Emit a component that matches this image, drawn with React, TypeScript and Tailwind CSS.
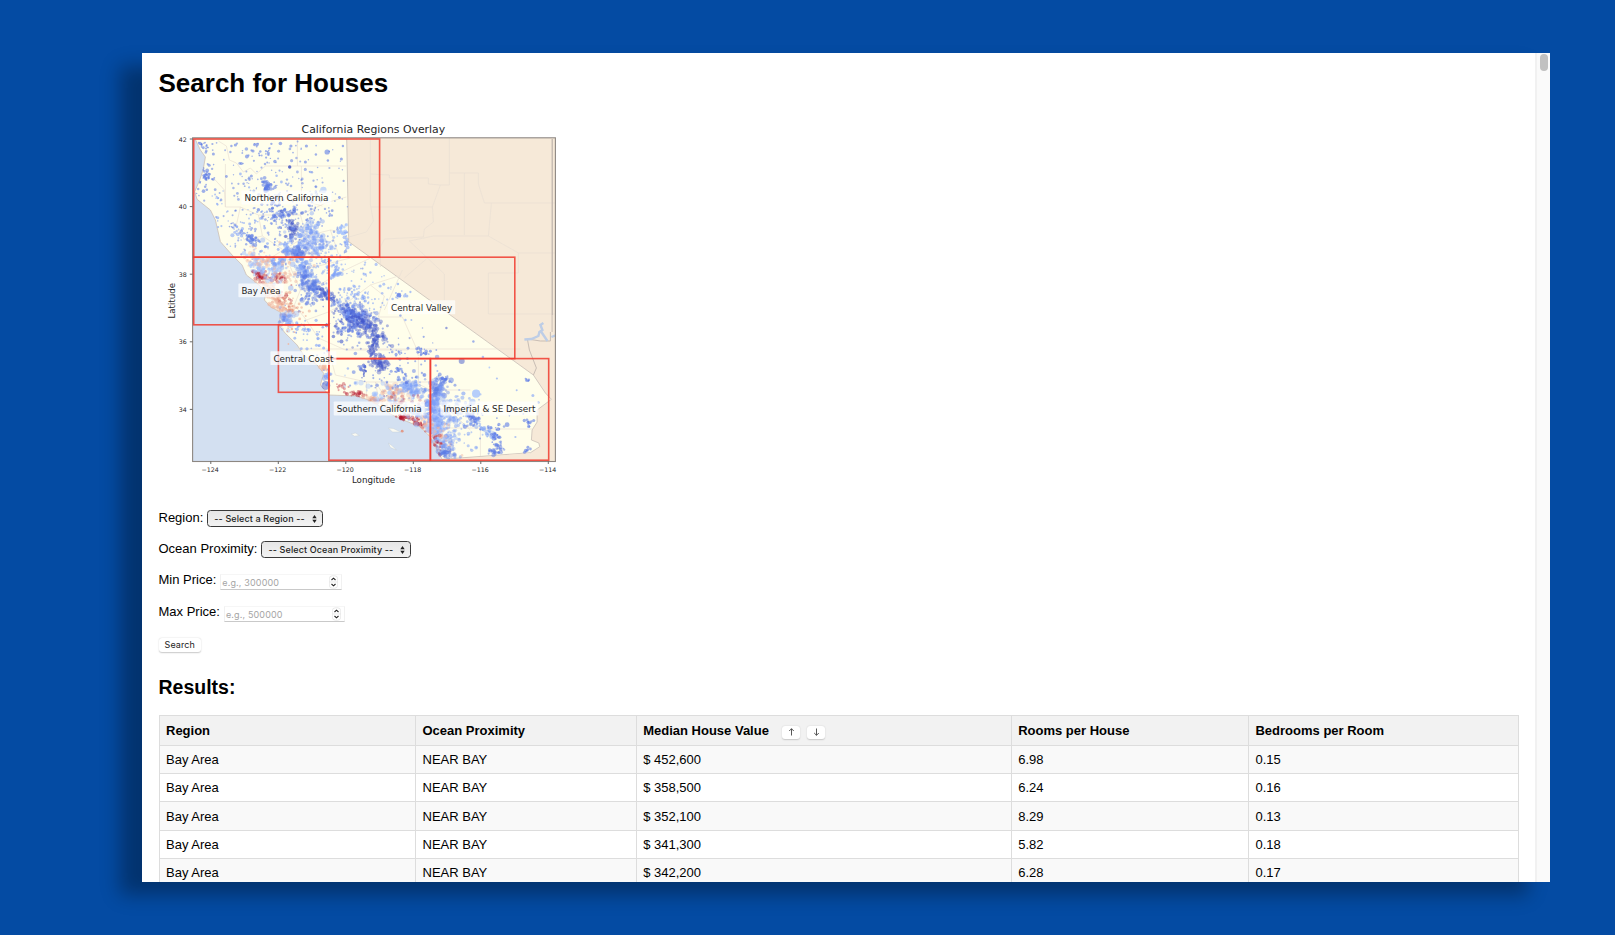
import React from "react";

type Dot = { x: number; y: number; r: number; c: string; o: number };
type Cluster = [cx: number, cy: number, sx: number, sy: number, angle: number, n: number, rMin: number, rMax: number, colour: string, opacity: number];

const DARK = "#4358cb";
const BLUE = "#5d7ce6";
const MID = "#7b9ff9";
const PALE = "#9ebeff";
const PINK = "#f0b59f";
const SALMON = "#e58a70";
const RED = "#b4142c";

const CLUSTERS: Cluster[] = [
  // scattered settlements of the north
  [262, 172, 50, 26, 0, 135, 0.7, 1.6, BLUE, 0.55],
  [285, 230, 34, 20, 20, 170, 0.7, 1.6, BLUE, 0.52],
  [310, 200, 26, 24, 0, 60, 0.7, 1.5, BLUE, 0.52],
  [258, 225, 26, 18, 0, 60, 0.7, 1.6, MID, 0.6],
  // north coast
  [202.5, 146, 2, 2, 0, 14, 0.8, 1.8, BLUE, 0.6],
  [206, 176, 2.6, 5.5, 0, 40, 0.8, 2, BLUE, 0.6],
  [217, 200, 2, 3, 0, 10, 0.7, 1.6, MID, 0.6],
  [216, 225, 2.5, 2.5, 0, 10, 0.7, 1.8, MID, 0.6],
  [232, 226, 2, 2, 0, 10, 0.7, 1.8, BLUE, 0.6],
  [237, 232, 3.5, 3.5, 0, 18, 0.8, 2.1, MID, 0.55],
  [251, 239, 5, 3, 35, 36, 0.8, 2.1, BLUE, 0.55],
  // Shasta and Redding
  [256, 148, 2, 2, 0, 8, 0.8, 1.8, BLUE, 0.6],
  [267, 157, 2, 5, 0, 12, 0.7, 1.6, BLUE, 0.6],
  [266, 186, 2.2, 3, 0, 34, 1, 2.4, BLUE, 0.55],
  [246, 181, 2, 2, 0, 8, 0.6, 1.5, BLUE, 0.55],
  [272, 210, 2, 4, 0, 20, 0.8, 2, BLUE, 0.6],
  [284, 215, 5, 2.5, 0, 36, 0.8, 2.3, BLUE, 0.5],
  [291, 228, 3, 6, 0, 60, 0.8, 2.3, DARK, 0.42],
  [309, 231, 5, 6, 0, 60, 1, 2.8, MID, 0.42],
  [307, 242, 8, 5, 0, 70, 1, 2.6, MID, 0.38],
  [320, 249, 4, 3.5, 0, 40, 1, 2.3, MID, 0.42],
  [342, 230, 3, 3, 0, 24, 0.8, 2, PALE, 0.6],
  [346, 241, 1.5, 4, 0, 16, 0.8, 2, MID, 0.55],
  [330, 212, 2, 2, 0, 5, 0.8, 1.5, BLUE, 0.6],
  [313, 208, 2, 2, 0, 5, 0.8, 1.5, BLUE, 0.6],
  // Sacramento and the delta
  [297, 253, 4.5, 3.2, 0, 60, 1.2, 3, BLUE, 0.4],
  [286, 250, 2.5, 3, 0, 22, 1, 2.3, MID, 0.5],
  [303, 268, 4, 8, -15, 75, 1, 2.8, MID, 0.42],
  [278, 264, 3.5, 3, 0, 30, 1.2, 3.2, MID, 0.42],
  [303, 277, 3, 5, 0, 40, 1, 2.4, BLUE, 0.45],
  [313, 286, 5, 4, 20, 75, 1, 2.8, BLUE, 0.4],
  [326, 295, 5, 2.4, 25, 44, 1, 2.3, DARK, 0.42],
  [311, 298, 7, 6, 0, 45, 0.8, 2, BLUE, 0.5],
  [334, 273, 3.5, 3, 0, 30, 1, 2.2, MID, 0.5],
  [326, 260, 7, 7, 0, 44, 0.7, 1.8, MID, 0.55],
  // wine country and bay
  [251, 258, 6, 4.5, 35, 36, 1, 2.6, PINK, 0.4],
  [259, 265, 7, 5, 30, 50, 1, 2.6, PALE, 0.5],
  [270, 261, 5, 4, 0, 22, 1, 2, PINK, 0.42],
  [260, 276, 3.6, 2.8, 40, 45, 0.9, 2.2, RED, 0.36],
  [277, 278, 5.4, 2.2, 10, 46, 0.9, 2.3, RED, 0.34],
  [270, 273, 6, 4, 10, 44, 1, 2.7, PALE, 0.48],
  [283, 274, 9, 6, 0, 36, 1, 2.2, PINK, 0.45],
  [268, 290, 4, 7, -30, 60, 1, 2.3, PINK, 0.45],
  [281, 299, 5, 3, 30, 36, 0.8, 2.1, SALMON, 0.42],
  [285, 299, 3, 2.5, 35, 20, 0.8, 1.9, RED, 0.33],
  [279, 307, 6, 3, 25, 40, 1, 2.5, PINK, 0.5],
  [292, 309, 7, 4, 0, 32, 0.8, 2, SALMON, 0.42],
  [286, 318, 4.2, 3.5, 0, 34, 1.4, 3.6, MID, 0.34],
  [282, 320, 2.5, 2.5, 0, 12, 1.5, 3, BLUE, 0.28],
  [301, 329, 4, 3, 30, 22, 0.8, 2, MID, 0.6],
  [312, 340, 10, 9, 30, 26, 0.8, 1.7, MID, 0.6],
  [287, 331, 4, 4, 45, 10, 0.6, 1.3, SALMON, 0.55],
  // San Joaquin valley
  [344, 309, 7, 3.5, 35, 60, 0.8, 2.2, BLUE, 0.48],
  [355, 316, 7, 5, 25, 110, 1, 2.7, BLUE, 0.42],
  [362, 323, 7, 4.5, 25, 70, 1, 2.5, DARK, 0.4],
  [375, 336, 4.5, 7, -25, 80, 1, 2.4, DARK, 0.42],
  [352, 330, 8, 5, 0, 60, 0.9, 2.2, BLUE, 0.5],
  [342, 320, 11, 9, 0, 50, 0.8, 1.9, DARK, 0.5],
  [371, 350, 2, 5, 0, 35, 1, 2, DARK, 0.5],
  [379, 364, 3.7, 3, 20, 56, 1, 2.6, DARK, 0.4],
  [364, 370, 1.8, 3, 0, 15, 0.8, 1.8, DARK, 0.6],
  [397, 370, 1.5, 1.5, 0, 6, 0.8, 2, BLUE, 0.6],
  [356, 296, 7, 4, 15, 38, 0.8, 2.1, MID, 0.5],
  [362, 290, 17, 14, 20, 60, 0.7, 1.6, MID, 0.55],
  [398, 294, 4, 3, 0, 10, 0.8, 1.8, MID, 0.6],
  [398, 352, 2, 2, 0, 10, 0.7, 1.8, BLUE, 0.6],
  [423, 353, 3, 2, 20, 18, 0.7, 1.8, BLUE, 0.6],
  [388, 342, 20, 14, 0, 26, 0.7, 1.4, BLUE, 0.55],
  // central coast
  [321, 368, 3.5, 2.5, 30, 28, 0.9, 2.2, PINK, 0.5],
  [326, 377, 3, 3.5, 0, 22, 0.9, 2.2, MID, 0.55],
  [341, 387, 3, 2.5, 0, 12, 0.8, 1.8, RED, 0.36],
  [356, 394, 4.2, 1.5, 5, 30, 0.9, 2.1, RED, 0.4],
  [372, 398, 5, 2, 20, 30, 1, 2.6, PINK, 0.45],
  // Los Angeles basin
  [393, 394, 7, 4, 0, 34, 1.2, 3.4, PINK, 0.32],
  [392, 396, 12, 5, 0, 75, 1, 3, PALE, 0.42],
  [384, 397, 10, 4, 0, 26, 1, 2.6, SALMON, 0.32],
  [411, 388, 7, 4, 15, 85, 1, 2.6, MID, 0.42],
  [405, 400, 9, 3, 0, 24, 1, 2.2, RED, 0.24],
  [400, 417.5, 3.2, 1.2, 0, 32, 1, 2, RED, 0.45],
  [412, 421, 5, 2, 30, 20, 0.9, 2, RED, 0.38],
  [419, 424, 3, 2.2, 40, 30, 0.9, 2.1, RED, 0.45],
  [427, 424, 5, 4, 35, 42, 1, 2.4, PINK, 0.45],
  [419, 412, 9, 5, 0, 55, 1, 2.5, PALE, 0.48],
  [395, 373, 20, 9, 0, 44, 0.8, 2, BLUE, 0.55],
  [406, 377, 5, 4, 0, 14, 0.8, 2, BLUE, 0.55],
  // inland empire and San Diego
  [436, 391, 4, 4, 0, 60, 1.2, 2.9, BLUE, 0.4],
  [435, 405, 6, 7, 0, 110, 1.2, 3.2, MID, 0.38],
  [444, 379, 3.5, 2, 0, 26, 0.8, 1.9, BLUE, 0.55],
  [440, 420, 7, 6, 0, 75, 1.2, 3, MID, 0.34],
  [435, 430, 4, 7, -15, 60, 1, 2.6, PALE, 0.5],
  [441, 443, 6, 8, -10, 75, 1, 2.8, MID, 0.38],
  [440, 437, 5, 7, -10, 40, 1, 2.3, PINK, 0.45],
  [438, 447, 2.2, 5, -10, 26, 0.9, 2, RED, 0.38],
  [445, 453, 4, 3.5, 0, 55, 1, 2.6, BLUE, 0.4],
  [457, 424, 12, 17, 0, 75, 0.8, 2.1, MID, 0.5],
  [462, 407, 12, 7, 0, 34, 0.8, 2, MID, 0.5],
  [473, 419, 3.5, 2.2, 30, 40, 0.9, 2.3, BLUE, 0.5],
  [484, 429, 7, 2.2, 40, 40, 0.8, 2, MID, 0.45],
  [496, 436, 2, 6, 0, 26, 0.8, 1.9, BLUE, 0.6],
  [496, 450, 2.6, 2.6, 0, 36, 0.9, 2.2, BLUE, 0.5],
  [492, 440, 10, 10, 0, 20, 0.7, 1.4, BLUE, 0.55],
  [528, 422, 2, 2, 0, 14, 0.7, 1.7, BLUE, 0.6],
  [526, 451, 1.8, 1.5, 0, 8, 0.7, 1.6, BLUE, 0.6],
  [527, 380, 1.2, 1.2, 0, 6, 0.8, 1.6, BLUE, 0.6],
];

// x, y, radius, colour, opacity of isolated districts
const SINGLES: [number, number, number, string, number][] = [
  [326.7, 152, 2.6, BLUE, 0.6], [289.3, 167, 1.7, "#3b4cc0", 0.8], [258, 209.7, 1.7, BLUE, 0.65],
  [235, 145, 1.6, BLUE, 0.6], [231, 146, 1.2, BLUE, 0.6], [246, 149, 1.8, BLUE, 0.55], [246.5, 156.5, 1.9, BLUE, 0.6],
  [241, 163.5, 1.5, BLUE, 0.6], [280, 143.5, 1.8, BLUE, 0.6], [290.5, 146, 1.6, BLUE, 0.6], [306, 146, 1.6, BLUE, 0.6],
  [342.5, 146, 1.2, BLUE, 0.6], [327.5, 160.5, 1.2, BLUE, 0.6], [341, 159, 1.5, BLUE, 0.6], [315.5, 154.5, 1.2, BLUE, 0.6],
  [305, 162, 1.5, BLUE, 0.6], [274.5, 161.5, 1.7, BLUE, 0.6], [213, 154, 1.5, BLUE, 0.6], [212, 144, 1.1, BLUE, 0.6],
  [251, 176, 1.5, BLUE, 0.6], [226, 176.5, 1.4, BLUE, 0.6], [339, 197.5, 1.4, BLUE, 0.6], [323, 190, 3.2, PALE, 0.6],
  [230, 152, 1.2, BLUE, 0.55], [240, 174, 1.4, MID, 0.6], [296, 158, 1.2, BLUE, 0.5], [297, 172, 1.4, BLUE, 0.5],
  [329, 168, 1.1, BLUE, 0.5], [310, 172, 1.3, MID, 0.6], [281, 182, 1.4, MID, 0.6], [233, 188, 1.3, BLUE, 0.5],
  [325.5, 385.5, 4.4, DARK, 0.5], [461.3, 361, 3, DARK, 0.5], [475.7, 393.7, 4.1, PALE, 0.75], [506.7, 424.7, 2.4, BLUE, 0.6],
  [436.7, 357, 2.3, BLUE, 0.5], [482.5, 357, 1.3, MID, 0.6], [463, 393.5, 2.1, MID, 0.6], [472, 402, 3.2, PALE, 0.6],
  [496.5, 378.5, 1.1, MID, 0.6], [516.3, 390.3, 1, MID, 0.6], [532.5, 395.5, 1.5, MID, 0.6], [473, 341.5, 1.2, BLUE, 0.6],
  [446, 328, 1.2, DARK, 0.55], [489, 367.5, 0.9, PALE, 0.7], [538, 402.5, 1.3, MID, 0.6], [401.8, 431.2, 1.4, SALMON, 0.8],
  [423.3, 336.8, 1.1, BLUE, 0.6], [370, 272.5, 1.2, MID, 0.6], [379.7, 286, 1.6, MID, 0.6], [397.5, 284, 1.3, MID, 0.6],
  [388, 288, 1.2, MID, 0.6], [398.5, 295.2, 2.4, BLUE, 0.75], [406.5, 296, 1.5, MID, 0.6], [411, 320, 1, MID, 0.6],
  [405, 320, 1.2, MID, 0.6], [382, 303, 1, MID, 0.6], [333, 336.5, 1.8, DARK, 0.6], [341, 341.5, 2.1, DARK, 0.6],
  [341, 334.5, 1.4, DARK, 0.6], [355, 353.5, 1.8, BLUE, 0.55], [450.8, 380, 2.6, BLUE, 0.5], [424, 375, 1.9, BLUE, 0.6],
  [413.5, 371, 2, BLUE, 0.5], [437, 371, 1, MID, 0.6], [515, 437, 1.1, MID, 0.6], [530, 449, 1.4, BLUE, 0.6],
  [347.5, 368.5, 1.2, MID, 0.6], [355, 383, 1.3, MID, 0.6], [288, 344, 0.9, PINK, 0.8],
];

function seeded(seed: number) {
  let s = seed;
  return () => {
    s = (s + 0x6d2b79f5) | 0;
    let t = Math.imul(s ^ (s >>> 15), 1 | s);
    t = (t + Math.imul(t ^ (t >>> 7), 61 | t)) ^ t;
    return ((t ^ (t >>> 14)) >>> 0) / 4294967296;
  };
}

const BORDER: [number, number][] = [
  [194.7, 139], [200, 150], [205, 157], [202.7, 170], [199.3, 180], [194.3, 191.7], [196.7, 199.3], [210, 210], [215, 220],
  [217.3, 230], [220, 241.7], [231.7, 255], [241.7, 265], [246, 275], [256.7, 283.3], [266, 291.7], [264, 300], [270, 306.7],
  [280.7, 312.7], [278.3, 325], [285, 333.3], [296.7, 345], [303.3, 355], [316.7, 365], [323.3, 373.3], [320, 385],
  [328.3, 395], [356.7, 396], [373, 401.7], [390, 414], [403, 420], [420, 427], [430, 437], [436.7, 450], [441.7, 459.3],
  [530, 452.7], [539.3, 446.7], [538.5, 443], [531, 440], [531.7, 430], [536.7, 422], [536.7, 410], [551, 399.3], [545, 393],
  [533, 375], [348.3, 241.7], [346.3, 139],
];

function inside(x: number, y: number) {
  let hit = false;
  for (let i = 0, j = BORDER.length - 1; i < BORDER.length; j = i++) {
    const [xi, yi] = BORDER[i];
    const [xj, yj] = BORDER[j];
    if (yi > y !== yj > y && x < ((xj - xi) * (y - yi)) / (yj - yi) + xi) hit = !hit;
  }
  return hit;
}

function buildDots(): Dot[] {
  const rnd = seeded(41);
  const normal = () => Math.sqrt(-2 * Math.log(1 - rnd())) * Math.cos(2 * Math.PI * rnd());
  const dots: Dot[] = [];
  for (const [cx, cy, sx, sy, a, n, r0, r1, c, o] of CLUSTERS) {
    const t = (a * Math.PI) / 180;
    for (let i = 0; i < n; i++) {
      const spread = rnd() < 0.15 ? 1.8 : 1.08;
      const u = normal() * sx * spread;
      const v = normal() * sy * spread;
      const x = cx + u * Math.cos(t) - v * Math.sin(t);
      const y = cy + u * Math.sin(t) + v * Math.cos(t);
      const r = r0 + (r1 - r0) * Math.pow(rnd(), 1.7);
      if (inside(x, y)) dots.push({ x, y, r, c, o });
    }
  }
  for (const [x, y, r, c, o] of SINGLES) dots.push({ x, y, r, c, o });
  return dots;
}

const DOTS = buildDots();
const STATE_PATH = "M" + BORDER.map((p) => p.join(" ")).join("L") + "Z";

const REGIONS: [number, number, number, number][] = [
  [193.3, 139, 185.9, 118.2],
  [193.3, 257.2, 135.2, 67.6],
  [278, 324.8, 50.5, 67.5],
  [328.5, 257.2, 185.9, 101.4],
  [328.5, 358.6, 101.5, 101.6],
  [430, 358.6, 118.3, 101.6],
];

const LABELS: [string, number, number, number][] = [
  ["Northern California", 244, 200.8, 84],
  ["Bay Area", 241, 293.7, 39.2],
  ["Central Valley", 390.6, 310.6, 61.2],
  ["Central Coast", 273, 361.5, 60],
  ["Southern California", 336.3, 411.8, 85],
  ["Imperial & SE Desert", 443, 411.8, 92],
];

function RegionMap() {
  return (
    <svg className="block h-[377px] w-[417px]" viewBox="158.6 113 417 377" fontFamily="'DejaVu Sans', sans-serif" fill="#262626">
      <defs>
        <clipPath id="plot">
          <rect x="192" y="138" width="363" height="323.5" />
        </clipPath>
      </defs>
      <text x="301.2" y="133.2" fontSize="11.2" textLength="143.6" lengthAdjust="spacingAndGlyphs">California Regions Overlay</text>
      <g clipPath="url(#plot)">
        <rect x="192" y="137" width="364" height="326" fill="#f6e9d8" />
        <path
          d="M192 137H194L200 150L205 157L202.7 170L199.3 180L194.3 191.7L196.7 199.3L210 210L215 220L217.3 230L220 241.7L231.7 255L241.7 265L246 275L256.7 283.3L266 291.7L264 300L270 306.7L280.7 312.7L278.3 325L285 333.3L296.7 345L303.3 355L316.7 365L323.3 373.3L320 385L328.3 395L356.7 396L373 401.7L390 414L403 420L420 427L430 437L436.7 450L441.7 462H192Z"
          fill="#d3e0f1"
        />
        <path d={STATE_PATH} fill="#fffeeb" stroke="#c9bfb8" strokeWidth="0.8" strokeLinejoin="round" />
        <g fill="none" stroke="#eae0d4" strokeWidth="0.7">
          <path d="M297 139V166H346M297 166H265L256 174L250 168L243 172L236 163L229 160L226 146L218 141M225 164V207H240L258 215H300L325 203L346 197M301 166V200L322 206M213 178L224 190L225 207M240 207L236 225L244 240L262 236L283 250L306 236L330 230L348 233M258 215L262 236M306 236L300 215M330 230L338 254M262 263L283 250L292 272L318 266L350 258M292 272L300 290L322 283L345 270L370 258M300 290L294 305L306 320L328 312L350 300L370 285L398 276M306 320L318 338L345 350H408M370 285L384 296L378 317H402M402 270L384 310M402 317L415 346L418 356M294 349H520M328 349L335 375L366 382V397M366 382H430M378 398L375 382L384 396L408 410M418 357V384L430 390H470M440 402L470 430M480 429H532M480 429V456M441 428H480" />
          <path d="M370 174L389 175V178H428V184L440 185L432 207L433 222L424 229L423 237L384 239L380 247V267M440 185H449V138M449 173H478V184L484 203H556M464 173V235M491 203L488 236M433 236H488L518 253H556M409 241L433 236M409 241L444 274V300M426 259L404 278M518 253V273H488V314H556M370 207H432" />
          <path d="M370 140V205L373 221L366 232L345 238" />
        </g>
        <path d="M551.7 139V332M533 375L536 368L529 350L527 339L540 341H550V332M552 139V315" fill="none" stroke="#c3b8b0" strokeWidth="0.9" />
        <path d="M524 339.500L531 339L538 336L539 332L542 330L540 325L543 323M541 332L547 341M551 337L556 335" fill="none" stroke="#bdcde6" strokeWidth="2.400" />
        <path d="M351 434L355 433L359 435.500L354 436.200ZM388 428L393 428.500L397 430.500L400 432L392 432ZM388 443L392 446L396 450L390 447.500Z" fill="#fafaf2" stroke="#bfc9d4" strokeWidth="0.4" />
        <path d="M488 430L494 431L496 440L488 436Z" fill="#d5e0f0" />
        <path d="M446 462V460L530 453L526 461Z" fill="#f6e9d8" />
        {DOTS.map((d, i) => (
          <circle key={i} cx={d.x.toFixed(1)} cy={d.y.toFixed(1)} r={d.r.toFixed(2)} fill={d.c} fillOpacity={d.o} />
        ))}
      </g>
      <rect x="192.200" y="137.800" width="362.800" height="323.700" fill="none" stroke="#8d8782" strokeWidth="1.100" />
      <g fill="none" stroke="#f03a2e" strokeOpacity="0.850" strokeWidth="1.600">
        {REGIONS.map(([x, y, w, h]) => (
          <rect key={x + "-" + y} x={x} y={y} width={w} height={h} />
        ))}
      </g>
      {LABELS.map(([t, x, y, w]) => (
        <g key={t}>
          <rect x={x - 3} y={y - 10.3} width={w + 6} height="13.900" rx="0.700" fill="#fff" fillOpacity="0.700" />
          <text x={x} y={y} fontSize="8.800" textLength={w} lengthAdjust="spacingAndGlyphs">{t}</text>
        </g>
      ))}
      <g fontSize="6.300">
        {[42, 40, 38, 36, 34].map((lat, i) => (
          <g key={lat}>
            <path d={`M189.400 ${139 + i * 67.6}H192`} stroke="#444" strokeWidth="0.800" />
            <text x="178.300" y={141.5 + i * 67.6}>{lat}</text>
          </g>
        ))}
        {[124, 122, 120, 118, 116, 114].map((lon, i) => (
          <g key={lon}>
            <path d={`M${210.4 + i * 67.5} 461.500V464`} stroke="#444" strokeWidth="0.800" />
            <text x={209.8 + i * 67.5} y="471.500" textAnchor="middle">{"−" + lon}</text>
          </g>
        ))}
      </g>
      <text x="351.500" y="483" fontSize="8.600" textLength="43.300" lengthAdjust="spacingAndGlyphs">Longitude</text>
      <text transform="translate(174.200 318.500) rotate(-90)" fontSize="8.600" textLength="35.500" lengthAdjust="spacingAndGlyphs">Latitude</text>
    </svg>
  );
}

function Select({ label, className }: { label: string; className: string }) {
  return (
    <button className={`flex h-[17px] items-center justify-between rounded-[3.500px] border border-[#3a3a3a] bg-linear-to-b from-[#e6e6e6] to-[#f3f3f3] pr-[5px] pl-[6px] font-['Inter',sans-serif] text-[9px] font-medium tracking-[0.120px] whitespace-nowrap text-[#222] ${className}`}>
      <span>{label}</span>
      <svg className="h-[8px] w-[5px]" viewBox="0 0 5 8" fill="#222">
        <path d="M2.500 0L4.700 3.200H0.300ZM2.500 8L4.700 4.800H0.300Z" />
      </svg>
    </button>
  );
}

function NumberField({ placeholder }: { placeholder: string }) {
  return (
    <div className="mt-[2px] flex h-[16px] w-[121.500px] items-center justify-between border border-t-[#f6f6f6] border-r-[#f1f1f1] border-b-[#c9c9c9] border-l-[#f1f1f1] bg-white pr-[3px] pl-[1px]">
      <span className="pt-[2px] font-['Inter',sans-serif] text-[9px] tracking-[0.150px] text-[#a5a5a5]">{placeholder}</span>
      <svg className="h-[14px] w-[9px]" viewBox="0 0 9 14" fill="none">
        <rect x="0.300" y="0.800" width="8.400" height="12.400" rx="3" fill="#fff" stroke="#dcdcdc" strokeWidth="0.600" />
        <path d="M0.500 7H8.500" stroke="#dcdcdc" strokeWidth="0.600" />
        <path d="M2.500 5L4.500 3.200L6.500 5M2.500 9L4.500 10.800L6.500 9" stroke="#222" strokeWidth="1.100" />
      </svg>
    </div>
  );
}

function SortButton({ down }: { down?: boolean }) {
  return (
    <button className="flex h-[13px] w-[18px] items-center justify-center rounded-[3px] bg-white shadow-[0_0.500px_1.500px_rgba(0,0,0,0.180)]">
      <svg className="h-[8px] w-[7px]" viewBox="0 0 7 8" fill="none" stroke="#444" strokeWidth="0.900">
        {down ? <path d="M3.500 0.500V7.300M1.200 5L3.500 7.300L5.800 5" /> : <path d="M3.500 7.500V0.700M1.200 3L3.500 0.700L5.800 3" />}
      </svg>
    </button>
  );
}

const ROWS = [
  ["$ 452,600", "6.98", "0.15"],
  ["$ 358,500", "6.24", "0.16"],
  ["$ 352,100", "8.29", "0.13"],
  ["$ 341,300", "5.82", "0.18"],
  ["$ 342,200", "6.28", "0.17"],
];

const TH = "border border-[#ddd] px-[6.500px] pt-[2px] text-left font-bold";
const TD = "border border-[#ddd] px-[6.500px] pt-px";

export default function App() {
  return (
    <div className="h-[935px] w-[1615px] overflow-hidden bg-[#044ba3] pt-[53px] pl-[142px] font-['Liberation_Sans',Arial,sans-serif] text-[13px] text-black">
      <div className="flex h-[829px] w-[1408px] bg-white shadow-[-22px_13px_18px_rgba(0,0,0,0.320)]">
        <main className="flex h-full w-[1393px] flex-col items-start overflow-hidden pt-[15px] pl-[16.500px]">
          <h1 className="h-[45px] shrink-0 text-[26px] leading-[31px] font-bold">Search for Houses</h1>
          <div className="shrink-0">
            <RegionMap />
          </div>
          <form className="flex shrink-0 flex-col items-start pt-[13px]">
            <div className="flex h-[31.300px] items-center gap-[4px]">
              <label className="pb-[2px]">Region:</label>
              <Select label="-- Select a Region --" className="w-[116px]" />
            </div>
            <div className="flex h-[31.300px] items-center gap-[4px]">
              <label className="pb-[2px]">Ocean Proximity:</label>
              <Select label="-- Select Ocean Proximity --" className="w-[150px]" />
            </div>
            <div className="flex h-[31.300px] items-center gap-[4px]">
              <label className="pb-[2px]">Min Price:</label>
              <NumberField placeholder="e.g., 300000" />
            </div>
            <div className="flex h-[31.300px] items-center gap-[4px]">
              <label className="pb-[2px]">Max Price:</label>
              <NumberField placeholder="e.g., 500000" />
            </div>
            <button className="mt-[10px] h-[14px] w-[42.500px] rounded-[3px] bg-white font-['Inter',sans-serif] text-[9px] leading-[14px] tracking-[0.100px] text-[#222] shadow-[0_0.500px_1.500px_rgba(0,0,0,0.220)]">Search</button>
          </form>
          <h2 className="mt-[23.800px] mb-[16.700px] h-[22px] shrink-0 text-[19.500px] leading-[22px] font-bold">Results:</h2>
          <table className="w-[1360px] shrink-0 table-fixed border-collapse">
            <colgroup>
              <col className="w-[256.500px]" />
              <col className="w-[220.700px]" />
              <col className="w-[375px]" />
              <col className="w-[237.300px]" />
              <col className="w-[270.500px]" />
            </colgroup>
            <thead>
              <tr className="h-[30px] bg-[#f2f2f2]">
                <th className={TH}>Region</th>
                <th className={TH}>Ocean Proximity</th>
                <th className={TH}>
                  <div className="flex items-center">
                    <span className="mr-[13.500px]">Median House Value</span>
                    <span className="flex gap-[7px] pt-[2px]">
                      <SortButton />
                      <SortButton down />
                    </span>
                  </div>
                </th>
                <th className={TH}>Rooms per House</th>
                <th className={TH}>Bedrooms per Room</th>
              </tr>
            </thead>
            <tbody>
              {ROWS.map((r, i) => (
                <tr key={i} className="h-[28.300px] odd:bg-[#f9f9f9]">
                  <td className={TD}>Bay Area</td>
                  <td className={TD}>NEAR BAY</td>
                  <td className={TD}>{r[0]}</td>
                  <td className={TD}>{r[1]}</td>
                  <td className={TD}>{r[2]}</td>
                </tr>
              ))}
            </tbody>
          </table>
        </main>
        <div className="flex h-full flex-1 justify-center border-l-2 border-[#f1f1f1] bg-[#fafafa]">
          <div className="mt-[0.500px] h-[17.500px] w-[8px] rounded-full bg-[#c1c1c1]" />
        </div>
      </div>
    </div>
  );
}
